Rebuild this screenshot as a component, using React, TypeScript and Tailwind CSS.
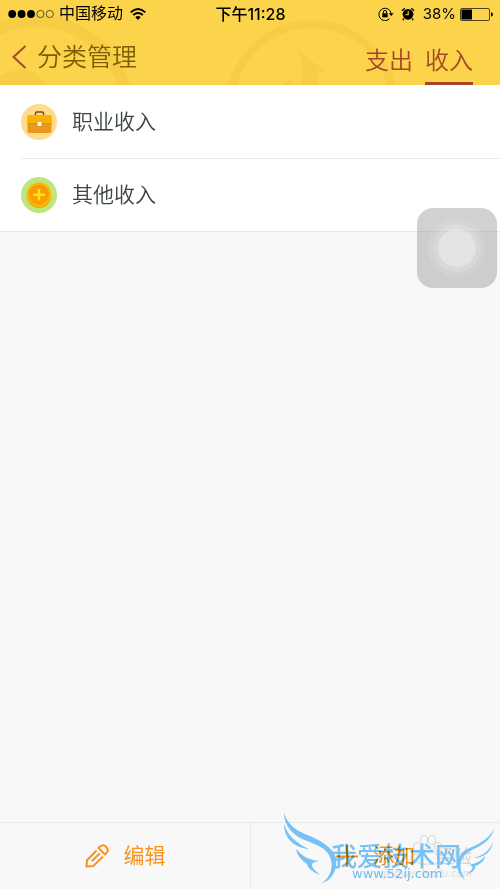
import { clsx } from "clsx";

const categories = [
  { name: "职业收入", icon: <BriefcaseIcon /> },
  { name: "其他收入", icon: <CoinIcon /> },
];

const tabs = ["支出", "收入"];

function BriefcaseIcon() {
  return (
    <svg viewBox="0 0 36 36" className="size-9 shrink-0" aria-hidden="true">
      <circle cx="18" cy="18" r="18" fill="#ffdb8e" />
      <path d="M14.5 11.5V9.3q0-1.3 1.3-1.3h5.4q1.300 0 1.300 1.300v2.200" fill="none" stroke="#7a4a10" strokeWidth="1.500" />
      <rect x="6.500" y="11" width="24" height="18" rx="1.800" fill="#ea971f" />
      <path d="M8.300 11h20.400q1.800 0 1.800 1.800v6.500h-24v-6.500q0-1.800 1.800-1.800z" fill="#f9b200" />
      <path d="M6.500 19.600h24" stroke="#dc9100" strokeWidth="1" />
      <rect x="16.500" y="18" width="4" height="4" rx="0.600" fill="#fff5e4" />
    </svg>
  );
}

function CoinIcon() {
  return (
    <svg viewBox="0 0 36 36" className="size-9 shrink-0" aria-hidden="true">
      <circle cx="18" cy="18" r="18" fill="#bfe67c" />
      <circle cx="18" cy="18.800" r="12.200" fill="#e5a60c" />
      <circle cx="18" cy="17.700" r="12.200" fill="#fab905" />
      <circle cx="18" cy="17.700" r="9.700" fill="#e98d04" />
      <circle cx="18" cy="18.200" r="9.200" fill="#fb9c00" />
      <path d="M18 12v11.600M12.200 17.800h11.600" stroke="#ffe11a" strokeWidth="2.400" />
    </svg>
  );
}

function SignalDots() {
  return (
    <svg viewBox="0 0 46 10" className="h-[10px] w-[46px]" aria-hidden="true">
      {[0, 1, 2, 3, 4].map((i) => (
        <circle
          key={i}
          cx={4.2 + i * 9.4}
          cy="5"
          r={i < 3 ? 3.9 : 3.6}
          fill={i < 3 ? "#000" : "none"}
          stroke={i < 3 ? "none" : "#222"}
          strokeWidth="0.7"
        />
      ))}
    </svg>
  );
}

function WifiIcon() {
  return (
    <svg viewBox="0 0 16 12" className="ml-[2px] h-3 w-4" aria-hidden="true">
      <path d="M0.700 4.400Q8-2.300 15.300 4.400M3.200 7Q8 2.800 12.800 7" fill="none" stroke="#000" strokeWidth="1.900" />
      <path d="M8 12 5.300 9.200Q8 7 10.700 9.200z" />
    </svg>
  );
}

function LockIcon() {
  return (
    <svg viewBox="0 0 16 14" className="h-[14px] w-4" aria-hidden="true">
      <path d="M11.500 11.800A6.200 6.200 0 1 1 13.200 6.500" fill="none" stroke="#000" strokeWidth="1" />
      <path d="M10.800 6.300h4.800l-2.400 2.800z" />
      <rect x="4.300" y="6.300" width="5.400" height="4" />
      <path d="M5.400 6.500V5q0-1.600 1.600-1.600T8.600 5v1.500" fill="none" stroke="#000" strokeWidth="1" />
    </svg>
  );
}

function AlarmIcon() {
  return (
    <svg viewBox="0 0 14 14" className="size-[14px]" aria-hidden="true">
      <circle cx="7" cy="7.300" r="5.400" />
      <path d="M0.900 3.700 3.900 1.200M13.100 3.700 10.100 1.200M3 11.500l-1.200 1.600M11 11.500l1.200 1.600" stroke="#000" strokeWidth="1.300" />
      <path d="M7.200 4v3.800H4.400" fill="none" stroke="#fbd44b" strokeWidth="1.100" />
    </svg>
  );
}

function BatteryIcon() {
  return (
    <svg viewBox="0 0 33 13" className="h-[13px] w-[33px]" aria-hidden="true">
      <rect x="0.500" y="0.500" width="29" height="12" rx="1.500" fill="none" stroke="#3a3213" strokeWidth="0.900" />
      <rect x="1.500" y="1.500" width="10.500" height="10" />
      <path d="M31 4.300q2 0.600 2 2.200t-2 2.200z" />
    </svg>
  );
}

function PencilIcon() {
  return (
    <svg viewBox="0 0 24 24" className="size-6" fill="none" stroke="#f7931e" strokeWidth="2" strokeLinejoin="round" aria-hidden="true">
      <path d="M11.500 6.500 2 16.300 1.500 22.500 8.300 22 18 12.500" />
      <path d="M6.800 17.200 14.800 9.300" />
      <path d="M13.500 4 15 2.500Q18 0 20.800 2.600 23.900 5.600 22 8.300L20 10.500z" />
    </svg>
  );
}

function PlusIcon() {
  return (
    <svg viewBox="0 0 22 22" className="size-[22px]" aria-hidden="true">
      <path d="M11 0v22M0 11.500h22" stroke="#f7931e" strokeWidth="2.200" />
    </svg>
  );
}

function HeaderPattern() {
  return (
    <svg viewBox="0 0 500 85" className="absolute inset-0 h-full w-full" preserveAspectRatio="xMidYMid slice" aria-hidden="true">
      <g fill="none" stroke="#efbf3d" strokeOpacity="0.320">
        <circle cx="36" cy="113" r="92" strokeWidth="12" />
        <circle cx="312" cy="106" r="82" strokeWidth="8" />
      </g>
      <g fill="#efbf3d" fillOpacity="0.320">
        <path d="M297 49 327 73 318 71V85H302V62z" />
        <path d="M0 85V76Q30 60 46 85zM284 85q4-6 8-5v5z" />
      </g>
    </svg>
  );
}

function StatusBar() {
  return (
    <div className="relative grid h-7 grid-cols-[1fr_auto_1fr] items-center pr-[7px] pl-2 text-base text-black">
      <div className="flex items-center gap-[5px]">
        <SignalDots />
        <span>中国移动</span>
        <WifiIcon />
      </div>
      <time className="font-['Inter','Noto_Sans_CJK_SC',sans-serif] font-medium">下午11:28</time>
      <div className="flex items-center justify-end">
        <LockIcon />
        <span className="mr-2 ml-[7px] flex">
          <AlarmIcon />
        </span>
        <span className="mr-1 font-['Inter',sans-serif] text-[15px]">38%</span>
        <BatteryIcon />
      </div>
    </div>
  );
}

function Header() {
  return (
    <header className="relative h-[85px] overflow-hidden bg-[#fbd44b]">
      <HeaderPattern />
      <StatusBar />
      <div className="relative flex h-[57px] justify-between pr-[27px] pl-3">
        <div className="flex items-center gap-[10px]">
          <button aria-label="返回">
            <svg viewBox="0 0 15 24" className="h-6 w-[15px]" aria-hidden="true">
              <path d="M13.500 1 1.500 12 13.500 23" fill="none" stroke="#a8462b" strokeWidth="2" />
            </svg>
          </button>
          <h1 className="text-[25px] leading-9 font-[350] text-[#7d5f05]">分类管理</h1>
        </div>
        <nav className="flex gap-3">
          {tabs.map((tab) => (
            <button
              key={tab}
              className={clsx(
                "border-b-3 pt-[11px] text-2xl font-[350] text-[#a8462b]",
                tab === "收入" ? "border-[#a8462b]" : "border-transparent"
              )}
            >
              {tab}
            </button>
          ))}
        </nav>
      </div>
    </header>
  );
}

function Watermark() {
  return (
    <div className="pointer-events-none absolute right-0 bottom-0 h-20 w-[222px] mix-blend-multiply">
      <div className="absolute right-7 bottom-5 flex text-lg leading-6 text-[#d9d9d9]">
        <span className="mr-1 font-bold text-[#ebebeb]">Bai</span>
        <span className="mr-1 font-bold text-[#ebebeb]">du</span>
        经验
      </div>
      <div className="absolute right-7 bottom-2 text-[11px] leading-4 text-[#e6e6e6] italic">jingyan.baidu.com</div>
      <svg viewBox="278 809 222 80" className="absolute inset-0 h-full w-full" aria-hidden="true">
        <g fill="#fff" stroke="#dadada" strokeWidth="1">
          <ellipse cx="417" cy="847" rx="3.500" ry="4.500" />
          <ellipse cx="424" cy="840" rx="3.500" ry="4.500" />
          <ellipse cx="432" cy="840" rx="3.500" ry="4.500" />
          <ellipse cx="438" cy="847" rx="3.500" ry="4.500" />
          <path d="M428 848q4 0 8 6 5 5 3 8-2 3-11 2-9 1-11-2-2-3 3-8 4-6 8-6z" />
        </g>
        <g fill="#7ac8fb">
          <path d="M284 813C287 823 295 830 305 834 320 840 333 847 336 858 338 870 331 881 322 883 332 876 334 864 329 855 323 845 310 843 300 838 289 832 284 822 284 813z" />
          <path d="M284 824C288 836 296 843 309 849 295 848 284 839 284 824z" />
          <path d="M296 849C303 857 309 860 319 861 314 862 312 863 312 865 312 868 316 871 320 875 311 871 308 868 307 864 301 860 297 855 296 849z" />
          <path d="M494 829C491 841 480 846 470 851 459 857 458 869 465 880 455 872 454 858 466 850 477 844 488 841 494 829z" />
          <path d="M493 842C489 851 484 855 474 858 484 858 492 851 493 842z" />
          <path d="M485 856C481 861 477 863 469 865 473 866 473 867 472 869 470 872 468 873 466 875 472 872 476 870 475 866 481 864 485 860 485 856z" />
        </g>
      </svg>
      <div className="absolute bottom-4 left-[53px] text-[26px] leading-8 font-medium whitespace-nowrap text-[#7ac8fb]">
        我爱技术网
      </div>
      <div className="absolute bottom-[7px] left-[74px] font-['DejaVu_Sans',sans-serif] text-[13px] leading-4 text-[#6fc2fb]">
        www.52ij.com
      </div>
    </div>
  );
}

export default function App() {
  return (
    <div className="relative flex min-h-screen flex-col bg-[#f8f8f8] font-['Liberation_Sans','Noto_Sans_CJK_SC',sans-serif]">
      <Header />
      <main className="flex-1">
        <ul className="border-b border-[#e6e6e6] bg-white pl-[21px]">
          {categories.map((category, i) => (
            <li
              key={category.name}
              className={clsx("flex h-[73px] items-center gap-[15px]", i > 0 && "border-t border-[#ebebeb]")}
            >
              {category.icon}
              <span className="text-[21px] leading-8 font-[350] text-[#3c4344]">{category.name}</span>
            </li>
          ))}
        </ul>
      </main>
      <footer className="grid h-[67px] grid-cols-2 border-t border-[#e9e9e9] text-[21px] text-[#f7931e]">
        <button className="flex items-center justify-center gap-[15px]">
          <PencilIcon />
          编辑
        </button>
        <button className="flex items-center justify-center gap-[15px] border-l border-[#e9e9e9]">
          <PlusIcon />
          添加
        </button>
      </footer>

      <button
        aria-label="辅助触控"
        className="absolute top-52 right-[3px] flex size-20 items-center justify-center rounded-2xl bg-[#999]/45"
      >
        <span className="flex size-[58px] items-center justify-center rounded-full bg-white/10">
          <span className="flex size-12 items-center justify-center rounded-full bg-white/15">
            <span className="size-[38px] rounded-full bg-white/30" />
          </span>
        </span>
      </button>
      <Watermark />
    </div>
  );
}
